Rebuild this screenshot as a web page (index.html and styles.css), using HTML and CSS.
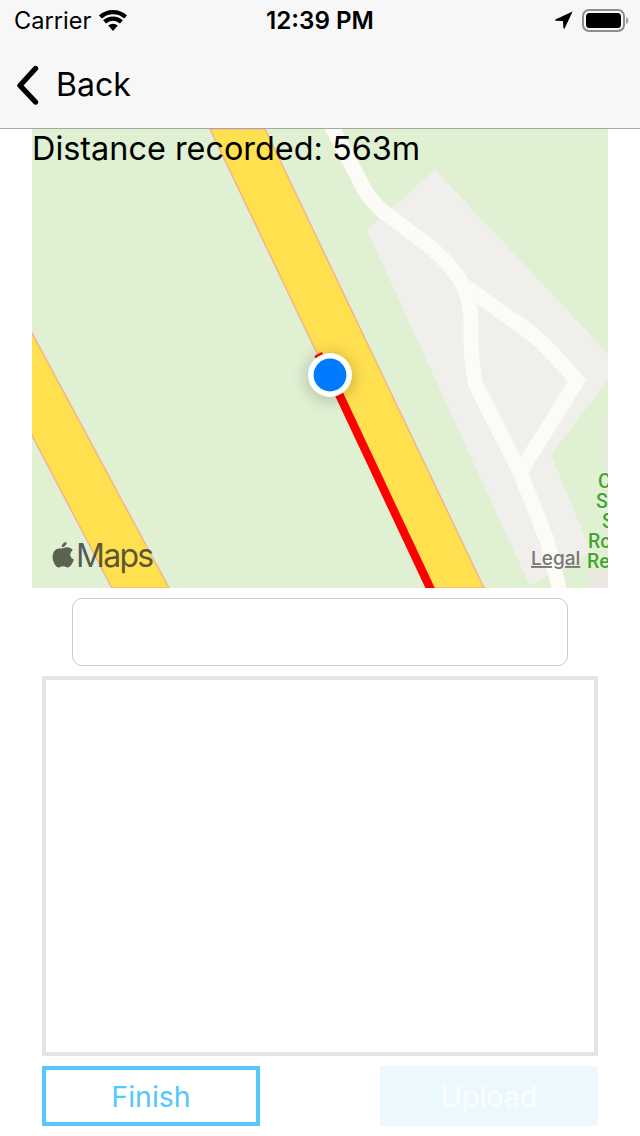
FILE: index.html
```html
<!DOCTYPE html>
<html lang="en">
<head>
  <meta charset="UTF-8">
  <meta name="viewport" content="width=device-width, initial-scale=1.0">
  <title>Record</title>
  <link rel="stylesheet" href="styles.css">
</head>
<body>
  <div id="root">
    <div class="topBar">
      <div class="statusBar">
        <div class="statusLeft">
          <span class="carrier">Carrier</span>
          <svg class="wifi" width="30" height="22" viewBox="0 0 30 22">
            <path d="M15 22 L10.2 16.6 A7.2 7.2 0 0 1 19.8 16.6 Z" fill="#000"/>
            <path d="M6.6 12.9 A12.4 12.4 0 0 1 23.4 12.9" class="wifiArc"/>
            <path d="M2.4 8 A18.6 18.6 0 0 1 27.6 8" class="wifiArc"/>
          </svg>
        </div>
        <span class="clock">12:39 PM</span>
        <div class="statusRight">
          <svg width="18" height="18" viewBox="0 0 18 18">
            <path d="M17.6 0.4 L0.4 8.6 Q-0.2 9.6 1 9.8 L8 10 L8.4 17 Q8.6 18.2 9.6 17.6 Z" fill="#000"/>
          </svg>
          <svg width="47" height="23" viewBox="0 0 47 23">
            <rect x="1" y="1" width="41" height="21" rx="6" fill="none" stroke="#8e8e8e" stroke-width="2"/>
            <rect x="4" y="4" width="35" height="15" rx="3.5" fill="#000"/>
            <path d="M44 8 Q46.5 9 46.5 11.5 Q46.5 14 44 15 Z" fill="#a5a5a5"/>
          </svg>
        </div>
      </div>
      <div class="navBar">
        <svg class="chevron" width="26" height="40" viewBox="0 0 26 40">
          <path d="M22.5 3.5 L7 20.5 L22.5 37" fill="none" stroke="#000" stroke-width="5.4" stroke-linecap="round" stroke-linejoin="round"/>
        </svg>
        <span class="backLabel">Back</span>
      </div>
    </div>

    <div class="mapWrap">
      <!-- viewBox is in page coordinates so the roads read off the screenshot -->
      <svg class="map" width="576" height="459" viewBox="32 129 576 459">
        <rect x="32" y="129" width="576" height="459" fill="#dff0d3"/>
        <path d="M435 171 L368 230 L530 584 L590 552 L550 455 L608 378 L608 355 Z" fill="#f0efeb" stroke="#f0efeb" stroke-width="2" stroke-linejoin="round"/>
        <path d="M606 417 H608 V588 H589 V571 H606 Z" fill="#ece7e0"/>
        <g fill="none" stroke="#fdfbf6" stroke-width="15">
          <path d="M331 125 L363 187 Q372 203 385 213 L425 243 Q450 262 463 285 L527 330 Q545 343 577 381 L520 472"/>
          <path d="M463 285 Q472 305 471 330 Q471 365 476 385 L520 472 L547 540 L560 592"/>
        </g>
        <path d="M210 129 H265 L484 588 H429 Z" fill="#ffe04f" stroke="#f5b48a" stroke-width="1.5"/>
        <path d="M26 322 L169 588 H112 L26 424 Z" fill="#ffe04f" stroke="#f5b48a" stroke-width="1.5"/>
        <path d="M318 354 L330 375 L432 592" fill="none" stroke="#fe0000" stroke-width="8.5"/>
        <g class="parkLabel">
          <text x="598" y="488">C</text>
          <text x="596" y="508">S</text>
          <text x="602" y="528">S</text>
          <text x="588" y="548">Ro</text>
          <text x="587" y="568">Re</text>
        </g>
        <circle class="markerRing" cx="330" cy="375" r="22" fill="#fff"/>
        <circle cx="330" cy="375" r="16.4" fill="#007aff"/>
        <path d="M66.6 542 C66.8 544.6 64.6 547.4 61.8 547.3 C61.4 544.8 63.8 542.2 66.6 542 Z M62 548.4 C63.4 548.4 65 547.2 67 547.2 C69 547.2 71.4 548 72.8 550.2 C69 552.4 69.6 557.8 74 559.4 C72.8 562.6 70.4 567.4 67.6 567.4 C65.8 567.4 65.2 566.2 63.2 566.2 C61 566.2 60.4 567.4 58.6 567.4 C55.6 567.4 52.6 561.6 52.6 557 C52.6 551.6 56 548.4 59 548.4 C60.2 548.4 61 548.4 62 548.4 Z" class="mapsMark"/>
        <text class="mapsWord" x="76" y="567">Maps</text>
        <text class="legal" x="531" y="565">Legal</text>
      </svg>
      <div class="distance">Distance recorded: 563m</div>
    </div>

    <input class="titleInput" type="text">
    <textarea class="notes"></textarea>

    <div class="buttons">
      <button class="btn finish">Finish</button>
      <button class="btn upload" disabled>Upload</button>
    </div>
  </div>
</body>
</html>
```

FILE: styles.css
```css
* {
  box-sizing: border-box;
  font-family: Inter, "Liberation Sans", Arial, sans-serif;
}
body {
  margin: 0;
  background: #fff;
}
#root {
  width: 640px;
  height: 1136px;
  overflow: hidden;
}
.topBar {
  height: 129px;
  background: #f7f7f7;
  border-bottom: 1px solid #a6a8a2;
}
.statusBar {
  height: 40px;
  position: relative;
  display: flex;
  align-items: center;
  justify-content: space-between;
  padding: 0 11px 0 14px;
}
.statusLeft,
.statusRight {
  display: flex;
  align-items: center;
}
.statusRight {
  gap: 9px;
}
.carrier {
  font-size: 23.6px;
  color: #000;
}
.wifi {
  margin-left: 7px;
}
.wifiArc {
  fill: none;
  stroke: #000;
  stroke-width: 4.4;
}
.clock {
  position: absolute;
  left: 266px;
  top: 6px;
  font-size: 24.2px;
  font-weight: 600;
  line-height: 30px;
  color: #000;
}
.navBar {
  height: 88px;
  display: flex;
  align-items: center;
  padding-left: 13px;
}
.chevron {
  margin-top: 1px;
}
.backLabel {
  margin-left: 17px;
  font-size: 32px;
  color: #000;
}
.mapWrap {
  position: relative;
  width: 576px;
  height: 459px;
  margin-left: 32px;
}
.map {
  display: block;
}
.distance {
  position: absolute;
  left: 0;
  top: 0;
  font-size: 32.4px;
  line-height: 40px;
  color: #000;
  white-space: nowrap;
}
.parkLabel text {
  font-family: Roboto, sans-serif;
  font-size: 19.5px;
  font-weight: 500;
  fill: #43a52e;
  stroke: #e8f3e0;
  stroke-width: 2px;
  paint-order: stroke;
}
.markerRing {
  filter: drop-shadow(0 2px 8px rgba(0, 0, 0, 0.25));
}
.mapsMark {
  fill: #5b6350;
}
.mapsWord {
  font-size: 32px;
  fill: rgba(40, 40, 40, 0.75);
  letter-spacing: -1.7px;
}
.legal {
  font-size: 19px;
  font-weight: 500;
  fill: #777;
  text-decoration: underline;
}
.titleInput {
  display: block;
  width: 496px;
  height: 68px;
  margin: 10px 0 0 72px;
  border: 1px solid #cdcdcd;
  border-radius: 10px;
  background: #fff;
}
.notes {
  display: block;
  width: 556px;
  height: 380px;
  margin: 10px 0 0 42px;
  border: 4px solid #e5e5e8;
  background: #fff;
  resize: none;
}
.buttons {
  display: flex;
  justify-content: space-between;
  width: 556px;
  margin: 10px 0 0 42px;
}
.btn {
  width: 218px;
  height: 60px;
  font-size: 28.5px;
  padding: 0;
  border-radius: 0;
}
.finish {
  background: #fff;
  border: 4px solid #53c8fb;
  color: #53c8fb;
}
.upload {
  background: #ebf8fe;
  border: none;
  color: #fbfeff;
}
```
